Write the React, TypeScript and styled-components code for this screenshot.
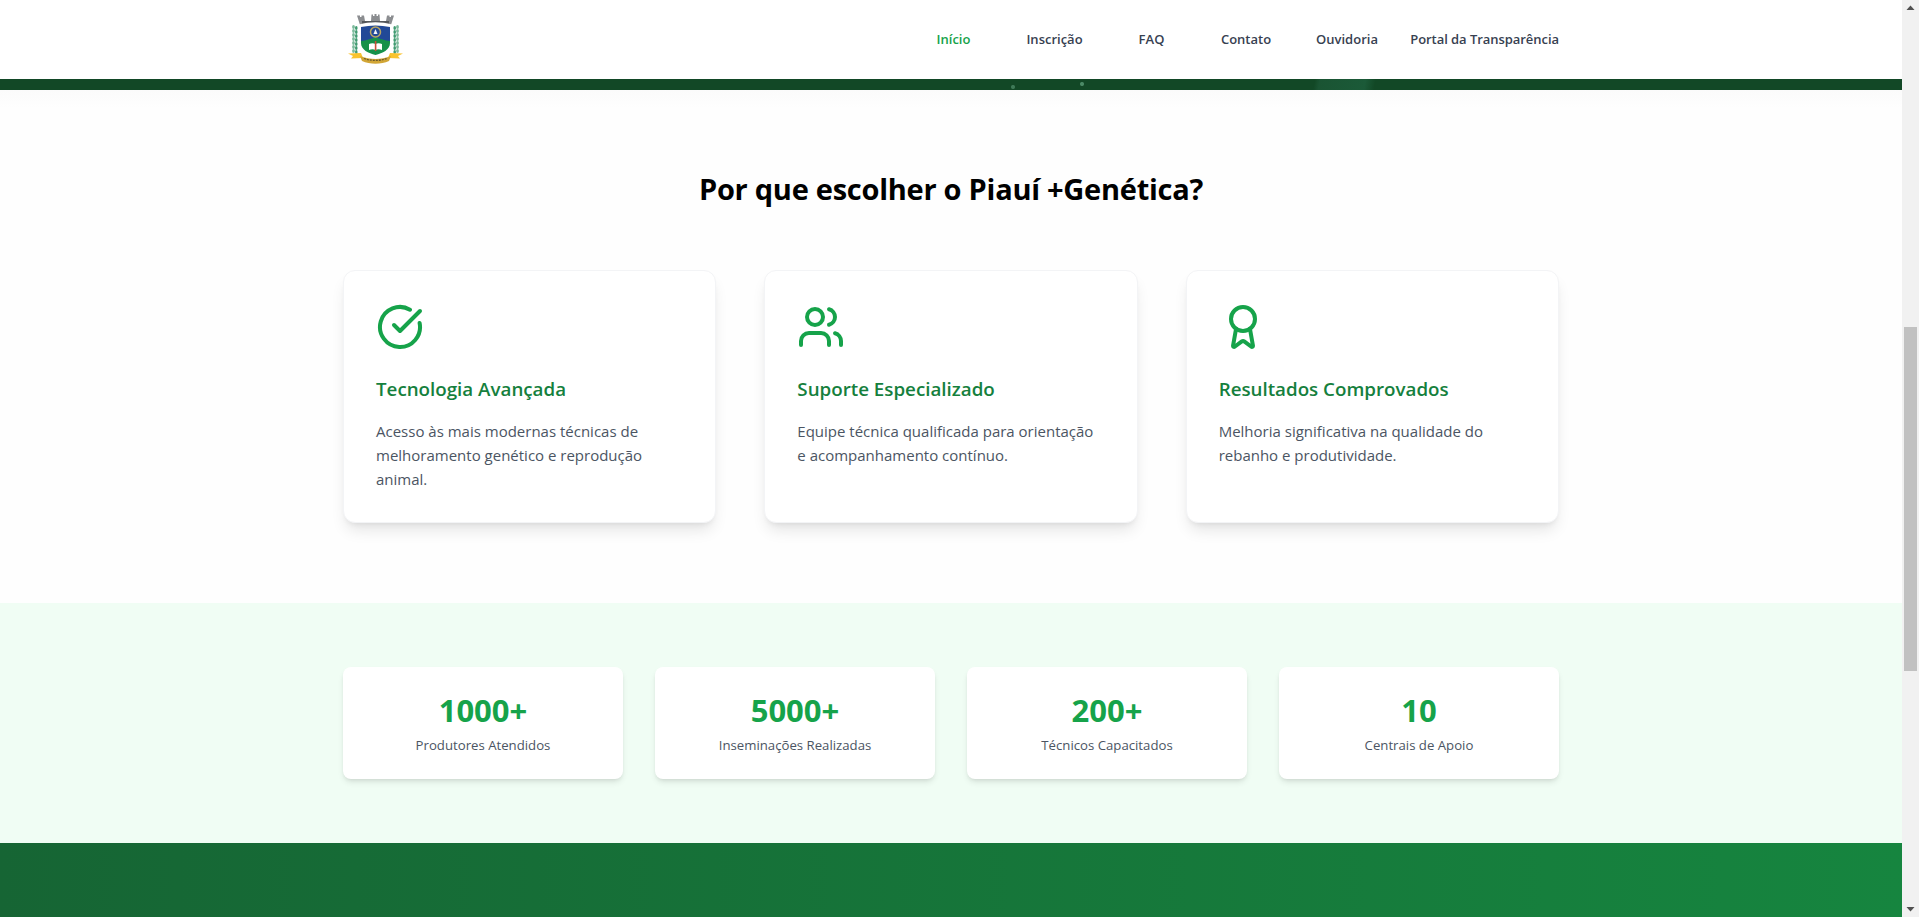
import React from "react";
import styled, { createGlobalStyle } from "styled-components";
import { CircleCheckBig, Users, Award } from "lucide-react";

const Global = createGlobalStyle`
  html, body { margin: 0; padding: 0; height: 100%; overflow: hidden; background: #fff; }
  * { box-sizing: border-box; }
  body { font-family: "Open Sans", "Noto Sans", "Liberation Sans", sans-serif; }
`;

const Shell = styled.div`
  display: flex;
  height: 917px;
  overflow: hidden;
`;
const Page = styled.div`
  flex: 1;
  min-width: 0;
  display: flex;
  flex-direction: column;
  background: #fefefe;
`;
const Header = styled.header`
  height: 79px;
  background: #fff;
  flex: none;
`;
const Container = styled.div`
  width: 1216px;
  margin: 0 auto;
`;
const HeaderInner = styled(Container)`
  display: flex;
  align-items: center;
  justify-content: space-between;
  height: 79px;
`;
const Logo = styled.svg`
  width: 55px;
  height: 52px;
  margin-left: 5px;
  margin-top: -3px;
  display: block;
`;
const Nav = styled.nav`
  display: flex;
  align-items: center;
  margin-top: -2px;
`;
const NavLink = styled.a<{ $w: number; $active?: boolean; $end?: boolean }>`
  width: ${(p) => p.$w}px;
  text-align: ${(p) => (p.$end ? "right" : "center")};
  font-size: 13px;
  font-weight: 600;
  line-height: 20px;
  white-space: nowrap;
  letter-spacing: ${(p) => (p.$end ? "-0.05px" : "0")};
  color: ${(p) => (p.$active ? "#16a34a" : "#374151")};
`;
const Band = styled.div`
  height: 11px;
  flex: none;
  background:
    radial-gradient(circle at 1013px 8px, #3f7a58 0 1.5px, transparent 2.5px),
    radial-gradient(circle at 1082px 5px, #4b8a66 0 1.5px, transparent 2.5px),
    linear-gradient(100deg, transparent 1295px, #1a5433 1300px, #1b5a38 1345px, transparent 1355px),
    #124826;
`;
const Features = styled.section`
  padding: 81px 0 80px;
  background: linear-gradient(#fbfbfb, #fefefe 18px);
`;
const Title = styled.h2`
  margin: 0 0 63px;
  text-align: center;
  font-size: 29px;
  line-height: 36px;
  font-weight: 700;
  letter-spacing: -0.26px;
  color: #000;
`;
const FeatureGrid = styled.div`
  display: grid;
  grid-template-columns: repeat(3, 1fr);
  gap: 48px;
`;
const FeatureCard = styled.article`
  height: 253px;
  padding: 32px;
  background: #fff;
  border: 1px solid #f3f4f6;
  border-radius: 12px;
  box-shadow: 0 10px 15px -3px rgba(0, 0, 0, 0.1), 0 4px 6px -4px rgba(0, 0, 0, 0.1);
`;
const IconWrap = styled.div`
  width: 48px;
  height: 48px;
  margin-bottom: 24px;
  color: #16a34a;
  svg { display: block; }
`;
const CardTitle = styled.h3`
  margin: 0 0 16px;
  font-size: 18.75px;
  line-height: 28px;
  font-weight: 600;
  color: #15803d;
`;
const CardText = styled.p`
  margin: 0;
  font-size: 15px;
  line-height: 24px;
  color: #4b5563;
`;
const Stats = styled.section`
  padding: 64px 0;
  background: #f0fdf4;
`;
const StatGrid = styled.div`
  display: grid;
  grid-template-columns: repeat(4, 1fr);
  gap: 32px;
`;
const StatCard = styled.div`
  height: 112px;
  padding: 25px 24px 23px;
  text-align: center;
  background: #fff;
  border-radius: 8px;
  box-shadow: 0 4px 6px -1px rgba(0, 0, 0, 0.1), 0 2px 4px -2px rgba(0, 0, 0, 0.1);
`;
const StatValue = styled.div`
  font-size: 31px;
  line-height: 36px;
  font-weight: 700;
  color: #16a34a;
`;
const StatLabel = styled.div`
  margin-top: 7px;
  font-size: 13.2px;
  line-height: 20px;
  color: #4b5563;
`;
const Cta = styled.section`
  flex: 1;
  background: linear-gradient(90deg, #166534, #16853f);
`;
const Scrollbar = styled.div`
  width: 17px;
  flex: none;
  background: #f1f1f1;
  display: flex;
  flex-direction: column;
  align-items: center;
`;
const ScrollArrow = styled.svg`
  width: 17px;
  height: 17px;
  flex: none;
  display: block;
`;
const Track = styled.div`
  flex: 1;
  width: 100%;
  padding-top: 310px;
  padding-bottom: 229px;
  display: flex;
  justify-content: center;
`;
const Thumb = styled.div`
  width: 13px;
  height: 100%;
  background: #c1c1c1;
`;

const features = [
  { icon: <CircleCheckBig size={48} strokeWidth={2} />, title: "Tecnologia Avançada", text: "Acesso às mais modernas técnicas de melhoramento genético e reprodução animal." },
  { icon: <Users size={48} strokeWidth={2} />, title: "Suporte Especializado", text: "Equipe técnica qualificada para orientação e acompanhamento contínuo." },
  { icon: <Award size={48} strokeWidth={2} />, title: "Resultados Comprovados", text: "Melhoria significativa na qualidade do rebanho e produtividade." },
];
const stats = [
  ["1000+", "Produtores Atendidos"],
  ["5000+", "Inseminações Realizadas"],
  ["200+", "Técnicos Capacitados"],
  ["10", "Centrais de Apoio"],
];
const links: { t: string; w: number; active?: boolean; end?: boolean }[] = [
  { t: "Início", w: 91, active: true },
  { t: "Inscrição", w: 111 },
  { t: "FAQ", w: 83 },
  { t: "Contato", w: 106 },
  { t: "Ouvidoria", w: 96 },
  { t: "Portal da Transparência", w: 164, end: true },
];

const laurelY = [15, 19, 23, 27, 31, 35, 39];

const Crest = () => (
  <Logo viewBox="0 0 55 52">
    <defs>
      <filter id="soft" x="-5%" y="-5%" width="110%" height="110%"><feGaussianBlur stdDeviation="0.45" /></filter>
    </defs>
    <g filter="url(#soft)">
      {laurelY.map((y) => (
        <g key={y}>
          <ellipse cx="5.500" cy={y} rx="1.400" ry="1.900" fill="#7dbb9c" />
          <ellipse cx="8.300" cy={y + 1} rx="1.300" ry="1.900" fill="#3f9a70" />
          <ellipse cx="46.700" cy={y + 1} rx="1.300" ry="1.900" fill="#3f9a70" />
          <ellipse cx="49.500" cy={y} rx="1.400" ry="1.900" fill="#7dbb9c" />
        </g>
      ))}
      <path d="M9 3.500h3v1.500h1.500V3.500h2.500L17 9h6l.500-6.500h1.500v1.500h1.500V2h2v2h1.500V2.500h1.500L32 9h6l1-5.500h2.500V5H43V3.500h3L43 13H12z" fill="#8b8d90" />
      <path d="M14 9h27v4H14z" fill="#55585c" />
      <path d="M11 12.500c11-3 22-3 33 0v18.500c0 8-9 12-16.500 14C20 43 11 39 11 31z" fill="#fff" />
      <path d="M13 15c9.500-2 19.500-2 29 0v14H13z" fill="#244a97" />
      <path d="M13 29c5-.5 10-2 14.500-4 4.500 2 9.500 3.500 14.500 4v2c0 7-7.500 10-14.500 12C20.500 41 13 38 13 31z" fill="#12914a" />
      <circle cx="27.500" cy="20" r="5" fill="none" stroke="#b9a662" strokeWidth="1.500" />
      <path d="M27.500 17l2 5h-4z" fill="#f2f4f8" />
      <path d="M21 32c2-1 5-1 6.500 0 1.500-1 4.500-1 6.500 0v6c-2-1-5-1-6.500 0-1.500-1-4.500-1-6.500 0z" fill="#fff" />
      <rect x="26.800" y="29" width="1.600" height="10" fill="#c94f38" />
      <path d="M0 41.500l13-.5 2 5-12 .500 2-2.500z" fill="#f9c32f" />
      <path d="M55 41.500l-13-.5-2 5 12 .500-2-2.500z" fill="#f9c32f" />
      <path d="M12 44c10 4 21 4 31 0l-2 5c-8 3.500-19 3.500-27 0z" fill="#d2a636" />
      <path d="M16 46.500c7 2.500 16 2.500 23 0" fill="none" stroke="#6d5a2c" strokeWidth="1.300" strokeDasharray="2 1" />
    </g>
  </Logo>
);

export default function App() {
  return (
    <Shell>
      <Global />
      <Page>
        <Header>
          <HeaderInner>
            <Crest />
            <Nav>
              {links.map((l) => (
                <NavLink key={l.t} $w={l.w} $active={l.active} $end={l.end}>{l.t}</NavLink>
              ))}
            </Nav>
          </HeaderInner>
        </Header>
        <Band />
        <Features>
          <Container>
            <Title>Por que escolher o Piauí +Genética?</Title>
            <FeatureGrid>
              {features.map((f) => (
                <FeatureCard key={f.title}>
                  <IconWrap>{f.icon}</IconWrap>
                  <CardTitle>{f.title}</CardTitle>
                  <CardText>{f.text}</CardText>
                </FeatureCard>
              ))}
            </FeatureGrid>
          </Container>
        </Features>
        <Stats>
          <Container>
            <StatGrid>
              {stats.map(([v, l]) => (
                <StatCard key={l}>
                  <StatValue>{v}</StatValue>
                  <StatLabel>{l}</StatLabel>
                </StatCard>
              ))}
            </StatGrid>
          </Container>
        </Stats>
        <Cta />
      </Page>
      <Scrollbar>
        <ScrollArrow viewBox="0 0 17 17"><path d="M4.500 10h8L8.500 5.500z" fill="#505050" /></ScrollArrow>
        <Track><Thumb /></Track>
        <ScrollArrow viewBox="0 0 17 17"><path d="M4.500 7h8L8.500 11.500z" fill="#505050" /></ScrollArrow>
      </Scrollbar>
    </Shell>
  );
}
